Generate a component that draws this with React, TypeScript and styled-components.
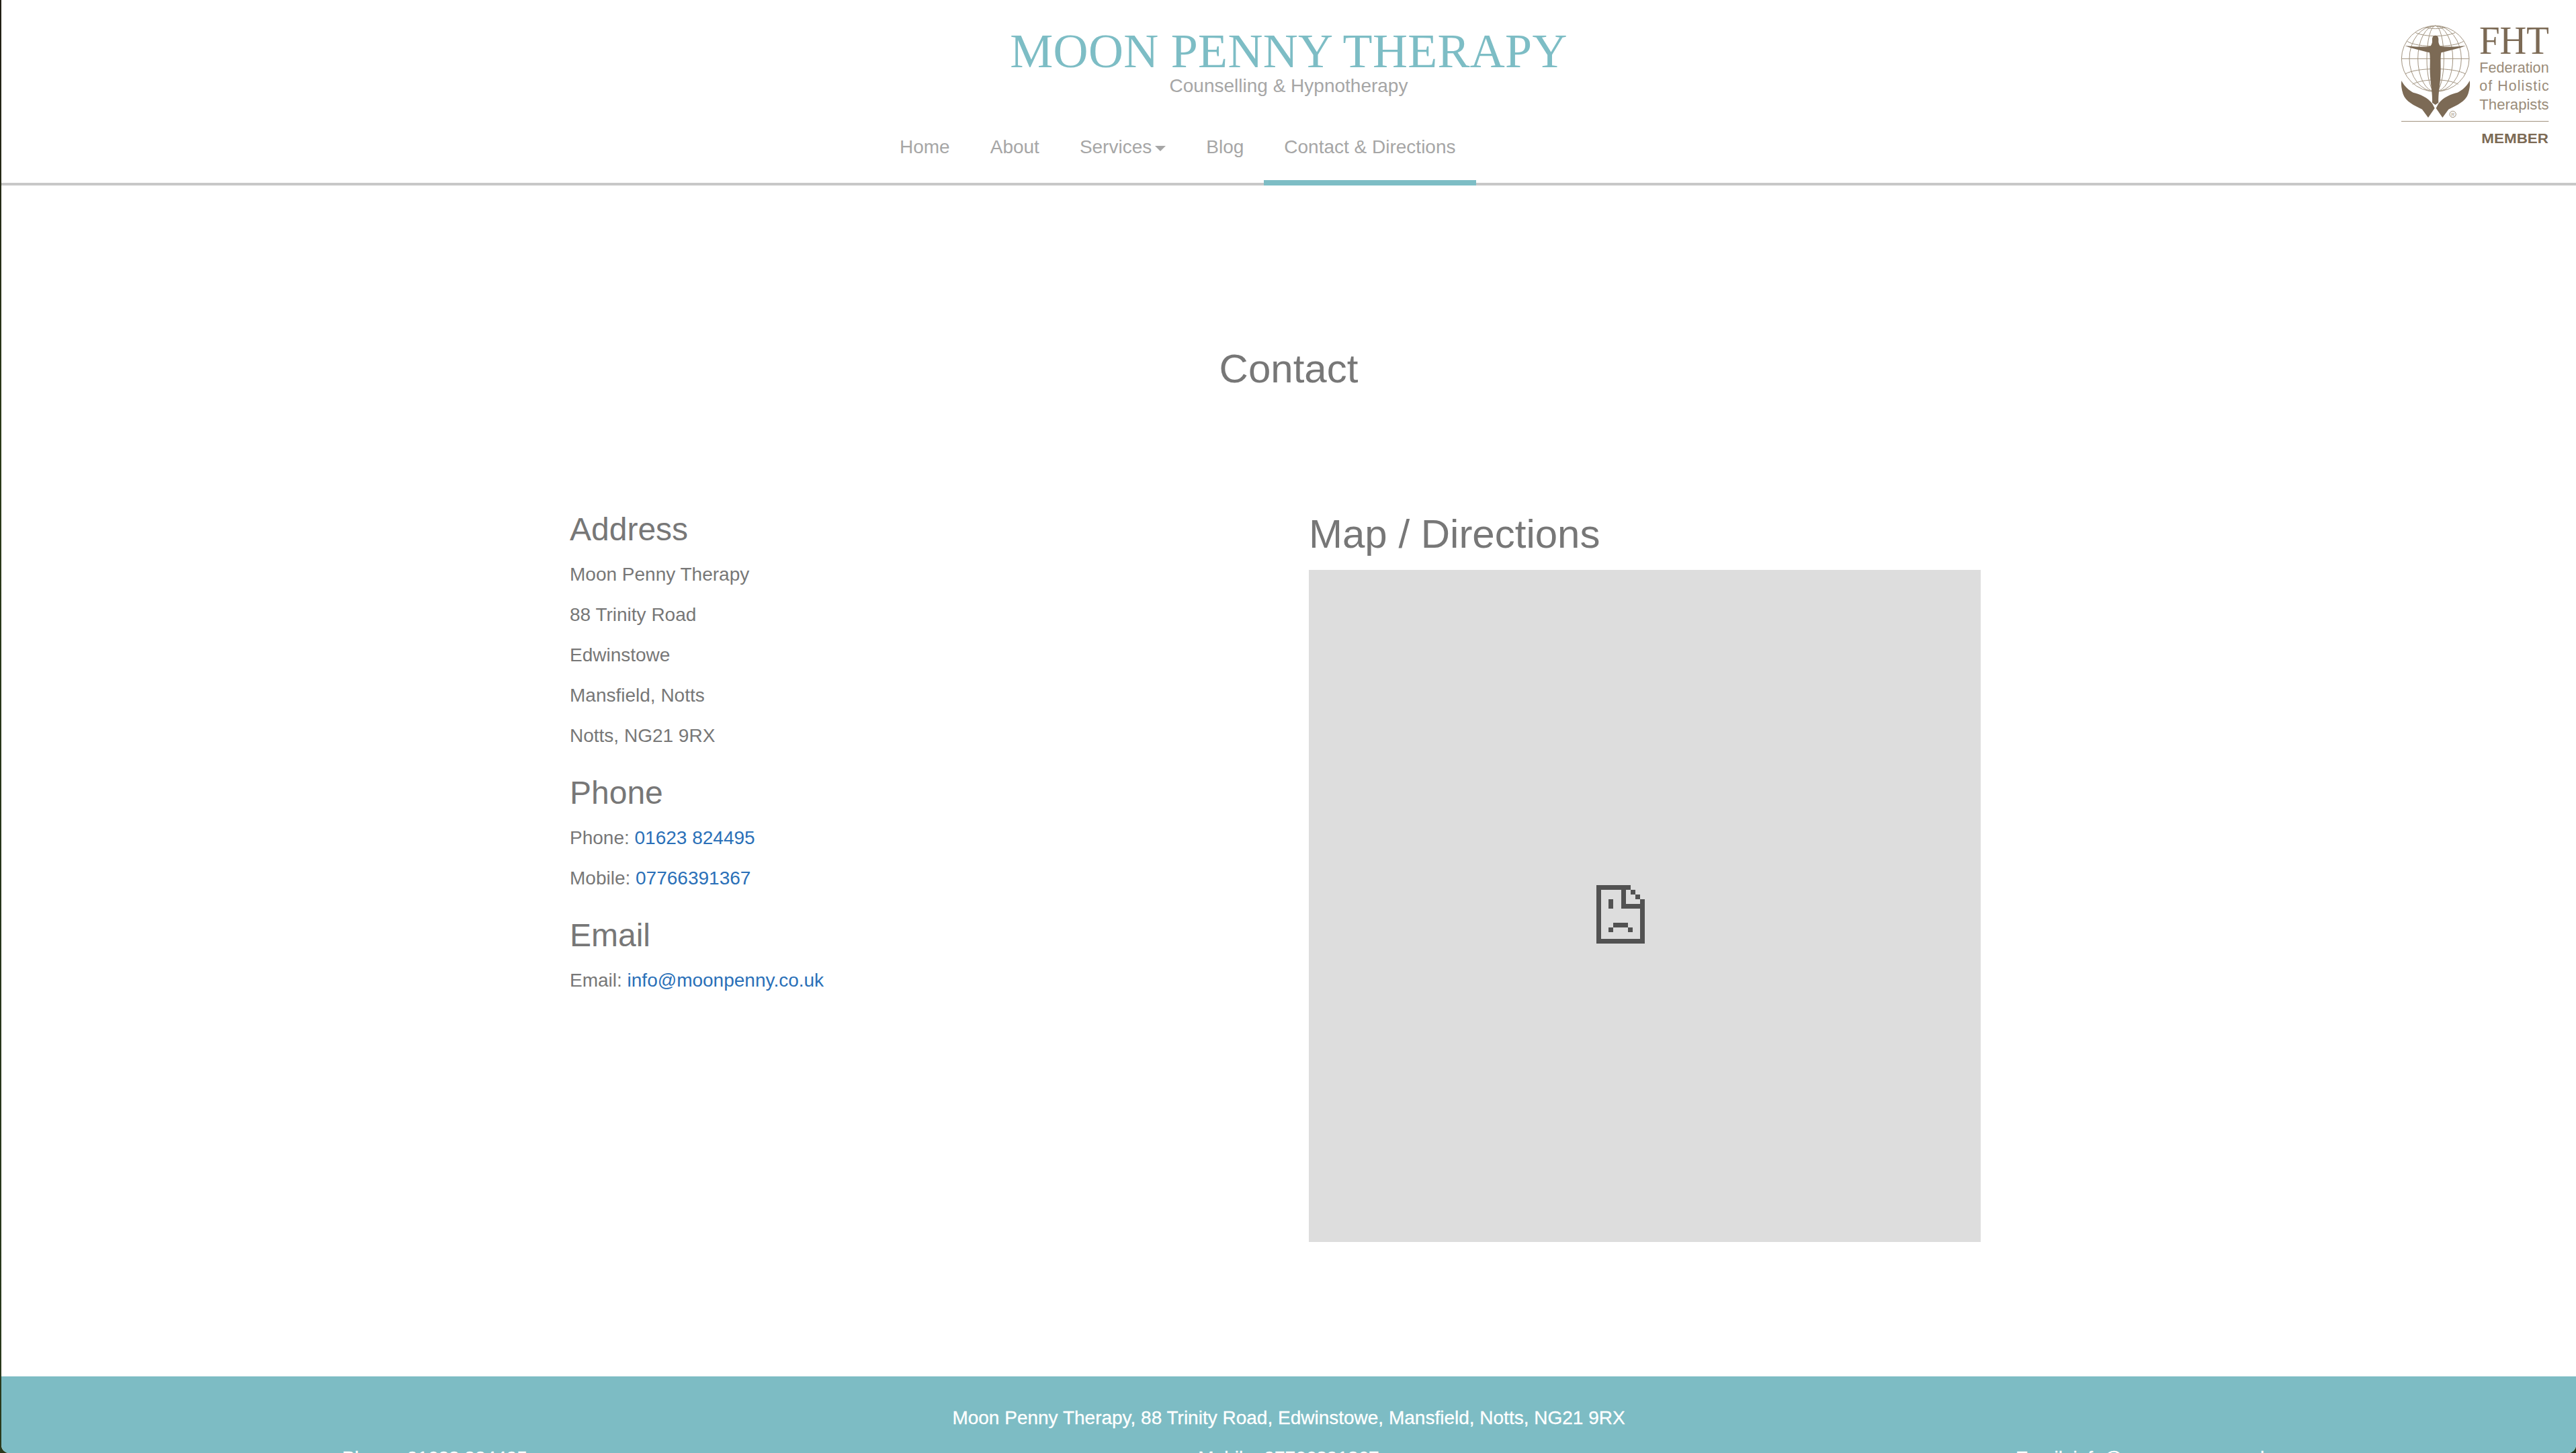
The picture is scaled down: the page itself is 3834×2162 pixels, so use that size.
import React from "react";
import styled, { createGlobalStyle } from "styled-components";

const Global = createGlobalStyle`
  html, body { margin: 0; padding: 0; height: 2162px; overflow: hidden; background: linear-gradient(180deg, #211e14 0%, #2b3a18 30%, #27351a 60%, #2a3a1c 100%); }
  #root { height: 2162px; }
  * { box-sizing: border-box; }
`;

const Frame = styled.div`
  position: relative;
  height: 2162px;
  margin-left: 2px;
  background: #fff;
  border-radius: 0 0 12px 12px;
  overflow: hidden;
  display: flex;
  flex-direction: column;
  font-family: "Liberation Sans", Arial, sans-serif;
  font-size: 28px;
  line-height: 40px;
  color: #777777;
`;

const Header = styled.header`
  height: 276px;
  flex: none;
  border-bottom: 4px solid #c8c8c8;
  display: flex;
  flex-direction: column;
  align-items: stretch;
`;

const Brand = styled.div`
  padding-top: 38px;
  text-align: center;
`;

const Title = styled.h1`
  margin: 0;
  font-family: "Liberation Serif", "Times New Roman", serif;
  font-weight: 400;
  font-size: 72px;
  line-height: 76px;
  letter-spacing: 0.3px;
  color: #7dbdc5;
`;

const Tagline = styled.div`
  margin-top: -2px;
  color: #a6a6a6;
  font-size: 28px;
  line-height: 32px;
`;

const Nav = styled.nav`
  margin-top: auto;
  display: flex;
  padding-left: 1307px;
  height: 96px;
`;

const NavLink = styled.a<{ $active?: boolean }>`
  display: flex;
  align-items: center;
  height: 100px;
  padding: 0 30px 6px;
  color: #a6a6a6;
  font-size: 28px;
  border-bottom: 8px solid ${(p) => (p.$active ? "#7dbdc5" : "transparent")};
`;

const Caret = styled.span`
  width: 0;
  height: 0;
  margin-left: 5px;
  margin-top: 4px;
  border-left: 8px solid transparent;
  border-right: 8px solid transparent;
  border-top: 8px solid #a6a6a6;
`;

const LogoSlot = styled.div`
  position: absolute;
  top: 0;
  right: 0;
  width: 304px;
  height: 270px;
`;

const Main = styled.main`
  flex: 1;
  min-height: 0;
`;

const PageHeading = styled.h2`
  margin: 0;
  padding-top: 240px;
  height: 476px;
  text-align: center;
  font-weight: 400;
  font-size: 60px;
  line-height: 66px;
  color: #777777;
`;

const Columns = styled.div`
  display: grid;
  grid-template-columns: 1100px 1000px;
  padding-left: 846px;
`;

const Details = styled.div`
  padding-top: 9px;
`;

const SubHeading = styled.h3`
  margin: 0 0 20px;
  font-weight: 400;
  font-size: 48px;
  line-height: 54px;
  color: #777777;
`;

const Line = styled.p`
  margin: 0 0 20px;
  font-size: 28px;
  line-height: 40px;
  & + h3 { margin-top: 38px; }
`;

const Link = styled.a`
  color: #2a70b8;
`;

const MapColumn = styled.div`
  padding-top: 10px;
`;

const MapHeading = styled.h2`
  margin: 0 0 20px;
  font-weight: 400;
  font-size: 60px;
  line-height: 66px;
  color: #777777;
`;

const MapBox = styled.div`
  width: 1000px;
  height: 1000px;
  background: #dddddd;
  display: flex;
  padding: 469px 0 0 428px;
`;

const Footer = styled.footer`
  flex: none;
  height: 114px;
  background: #7dbcc4;
  color: #fff;
  overflow: hidden;
  padding-top: 42px;
  -webkit-text-stroke: 0.3px #fff;
`;

const FooterAddress = styled.div`
  text-align: center;
  line-height: 40px;
  height: 60px;
`;

const FooterRow = styled.div`
  display: grid;
  grid-template-columns: repeat(3, 1271px);
  justify-content: center;
  text-align: center;
  line-height: 40px;
`;

const SadPage = () => (
  <svg width="72" height="87" viewBox="0 0 216 261" shapeRendering="crispEdges" fill="#525252">
    <rect x="0" y="0" width="153" height="21" />
    <rect x="0" y="0" width="21" height="261" />
    <rect x="0" y="240" width="216" height="21" />
    <rect x="195" y="63" width="21" height="198" />
    <rect x="111" y="21" width="21" height="84" />
    <rect x="111" y="84" width="105" height="21" />
    <rect x="153" y="21" width="21" height="21" />
    <rect x="174" y="42" width="21" height="21" />
    <rect x="54" y="63" width="21" height="42" />
    <rect x="75" y="168" width="66" height="21" />
    <rect x="54" y="189" width="21" height="21" />
    <rect x="141" y="189" width="21" height="21" />
  </svg>
);

const brown = "#7c6a55";
const grid = "#a1937f";

const FhtLogo = () => (
  <svg width="304" height="270" viewBox="0 0 912 810">
    <g fill="none" stroke={grid} strokeWidth="3">
      <ellipse cx="284" cy="262" rx="151" ry="147" />
      <ellipse cx="284" cy="262" rx="38" ry="147" />
      <ellipse cx="284" cy="262" rx="78" ry="147" />
      <ellipse cx="284" cy="262" rx="116" ry="147" />
      <path d="M133 262H435" />
      <path d="M158 184C200 214 368 214 410 184" />
      <path d="M196 146C240 166 328 166 372 146" />
      <path d="M240 122C262 130 306 130 328 122" />
      <path d="M150 330C200 300 368 300 418 330" />
      <path d="M182 376C230 350 338 350 386 376" />
    </g>
    <path
      fill={brown}
      d="M284 158C295 158 299 168 298 180C297 190 300 198 306 206C340 211 390 208 420 204C390 216 345 226 310 235C305 265 310 300 307 340C305 380 296 420 298 458L284 468L270 458C272 420 263 380 261 340C258 300 263 265 258 235C223 226 178 216 148 204C178 208 228 211 262 206C268 198 271 190 270 180C269 168 273 158 284 158Z"
    />
    <path
      fill={brown}
      d="M133 360C145 385 165 402 185 413C215 420 250 435 270 462L281 483L252 525L225 488C190 472 150 452 140 420C132 395 130 375 133 360Z"
    />
    <path
      fill={brown}
      d="M437 360C425 385 405 402 383 413C353 420 318 435 298 462L287 483L316 525L343 488C378 472 420 452 430 420C438 395 440 375 437 360Z"
    />
    <circle cx="362" cy="510" r="14" fill="none" stroke={grid} strokeWidth="3" />
    <text x="362" y="518" textAnchor="middle" fontFamily="Liberation Sans" fontSize="21" fill={grid}>R</text>
    <text x="480" y="240" fontFamily="Liberation Serif" fontSize="178" textLength="312" lengthAdjust="spacingAndGlyphs" fill={brown}>FHT</text>
    <g fontFamily="Liberation Sans" fontSize="64" fill="#9a8c79">
      <text x="481" y="325" textLength="310" lengthAdjust="spacingAndGlyphs">Federation</text>
      <text x="481" y="406" textLength="310" lengthAdjust="spacing">of Holistic</text>
      <text x="481" y="488" textLength="310" lengthAdjust="spacingAndGlyphs">Therapists</text>
    </g>
    <rect x="132" y="540" width="658" height="3" fill="#a1937f" />
    <text x="490" y="638" fontFamily="Liberation Sans" fontWeight="700" fontSize="60" textLength="299" lengthAdjust="spacingAndGlyphs" fill={brown}>MEMBER</text>
  </svg>
);

export default function App() {
  return (
    <>
      <Global />
      <Frame>
        <Header>
          <Brand>
            <Title>MOON PENNY THERAPY</Title>
            <Tagline>Counselling &amp; Hypnotherapy</Tagline>
          </Brand>
          <Nav>
            <NavLink>Home</NavLink>
            <NavLink>About</NavLink>
            <NavLink>
              Services
              <Caret />
            </NavLink>
            <NavLink>Blog</NavLink>
            <NavLink $active>Contact &amp; Directions</NavLink>
          </Nav>
        </Header>
        <LogoSlot>
          <FhtLogo />
        </LogoSlot>
        <Main>
          <PageHeading>Contact</PageHeading>
          <Columns>
            <Details>
              <SubHeading>Address</SubHeading>
              <Line>Moon Penny Therapy</Line>
              <Line>88 Trinity Road</Line>
              <Line>Edwinstowe</Line>
              <Line>Mansfield, Notts</Line>
              <Line>Notts, NG21 9RX</Line>
              <SubHeading>Phone</SubHeading>
              <Line>
                Phone: <Link>01623 824495</Link>
              </Line>
              <Line>
                Mobile: <Link>07766391367</Link>
              </Line>
              <SubHeading>Email</SubHeading>
              <Line>
                Email: <Link>info@moonpenny.co.uk</Link>
              </Line>
            </Details>
            <MapColumn>
              <MapHeading>Map / Directions</MapHeading>
              <MapBox>
                <SadPage />
              </MapBox>
            </MapColumn>
          </Columns>
        </Main>
        <Footer>
          <FooterAddress>Moon Penny Therapy, 88 Trinity Road, Edwinstowe, Mansfield, Notts, NG21 9RX</FooterAddress>
          <FooterRow>
            <span>Phone: 01623 824495</span>
            <span>Mobile: 07766391367</span>
            <span>Email: info@moonpenny.co.uk</span>
          </FooterRow>
        </Footer>
      </Frame>
    </>
  );
}
